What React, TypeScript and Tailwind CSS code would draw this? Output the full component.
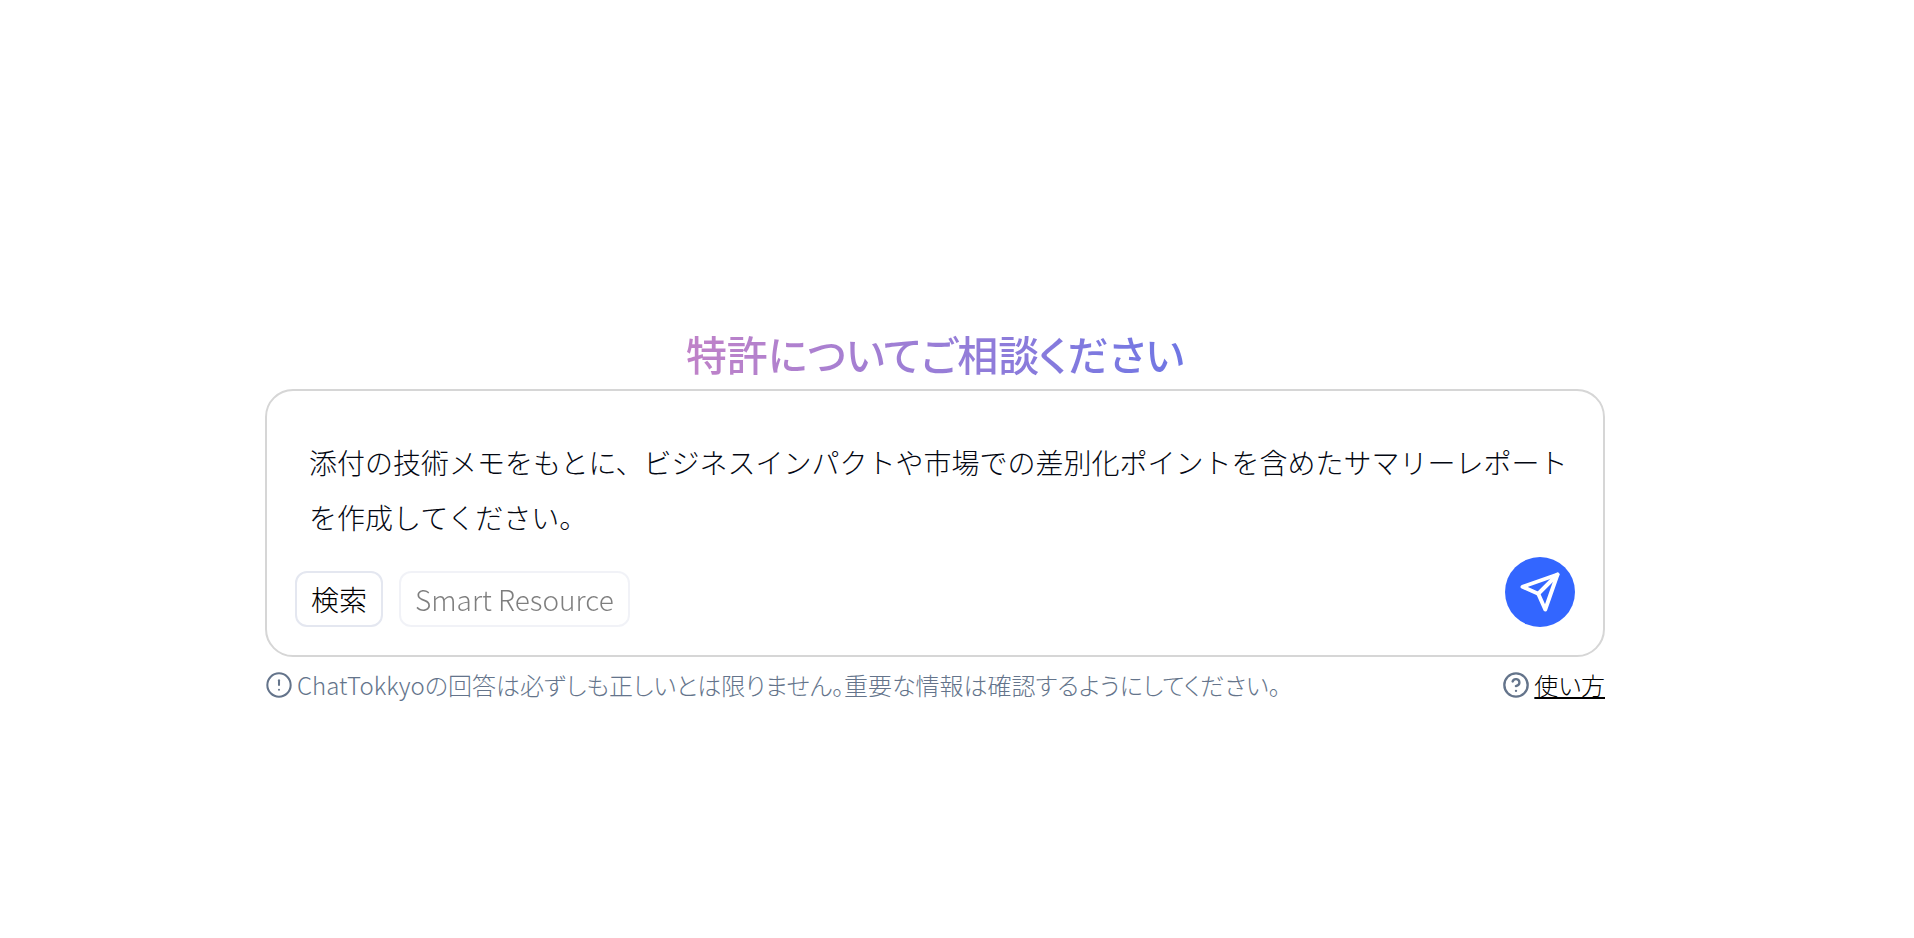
import { useState } from "react";
import { CircleAlert, CircleHelp } from "lucide-react";

export default function App() {
  const [text, setText] = useState(
    "添付の技術メモをもとに、ビジネスインパクトや市場での差別化ポイントを含めたサマリーレポートを作成してください。"
  );

  return (
    <main className="min-h-screen flex flex-col items-center justify-center bg-white pt-22 pr-11 font-['Noto_Sans_CJK_JP',sans-serif] font-light text-black">
      <div className="w-[calc(100%-48px)] max-w-[1340px]">
        {/* 見出し */}
        <h1 className="mx-auto mb-1.5 w-fit bg-linear-to-r from-[#c082c8] to-[#6f76e4] bg-clip-text text-[41px] leading-[60px] font-medium text-transparent [font-feature-settings:'palt']">
          特許についてご相談ください
        </h1>

        {/* 入力エリア */}
        <form
          onSubmit={(e) => e.preventDefault()}
          className="rounded-[28px] border-2 border-[#d6d6d6] p-7"
        >
          <textarea
            aria-label="相談内容"
            rows={2}
            value={text}
            onChange={(e) => setText(e.target.value)}
            className="block w-full resize-none overflow-hidden pt-4 pb-3 pl-3.5 text-[28px] leading-[55px] text-gray-950 outline-none"
          />
          <div className="flex items-end justify-between">
            <div className="flex gap-4 text-[28px] leading-[52px]">
              <button
                type="button"
                className="rounded-xl border-2 border-[#e4e7f0] px-3.5"
              >
                検索
              </button>
              <button
                type="button"
                disabled
                className="rounded-xl border-2 border-[#e4e7f0] px-3.5 opacity-50"
              >
                Smart Resource
              </button>
            </div>
            <button
              type="submit"
              aria-label="送信"
              className="flex size-[70px] items-center justify-center rounded-full bg-[#3366ff] text-white"
            >
              <SendIcon />
            </button>
          </div>
        </form>

        {/* 注意書き */}
        <div className="mt-2.5 flex items-center justify-between text-[24px] leading-9 [font-feature-settings:'palt']">
          <p className="flex items-center gap-1 text-[#64748b]">
            <CircleAlert size={28} strokeWidth={1.75} />
            ChatTokkyoの回答は必ずしも正しいとは限りません。重要な情報は確認するようにしてください。
          </p>
          <div className="flex items-center gap-1">
            <CircleHelp size={28} className="text-[#64748b]" />
            <a href="#" className="underline">
              使い方
            </a>
          </div>
        </div>
      </div>
    </main>
  );
}

function SendIcon() {
  return (
    <svg
      className="size-[42px]"
      viewBox="0 0 24 24"
      fill="none"
      stroke="currentColor"
      strokeWidth="2.25"
      strokeLinecap="round"
      strokeLinejoin="round"
    >
      <path d="m22 2-7 20-4-9-9-4Z" />
      <path d="M22 2 11 13" />
    </svg>
  );
}
